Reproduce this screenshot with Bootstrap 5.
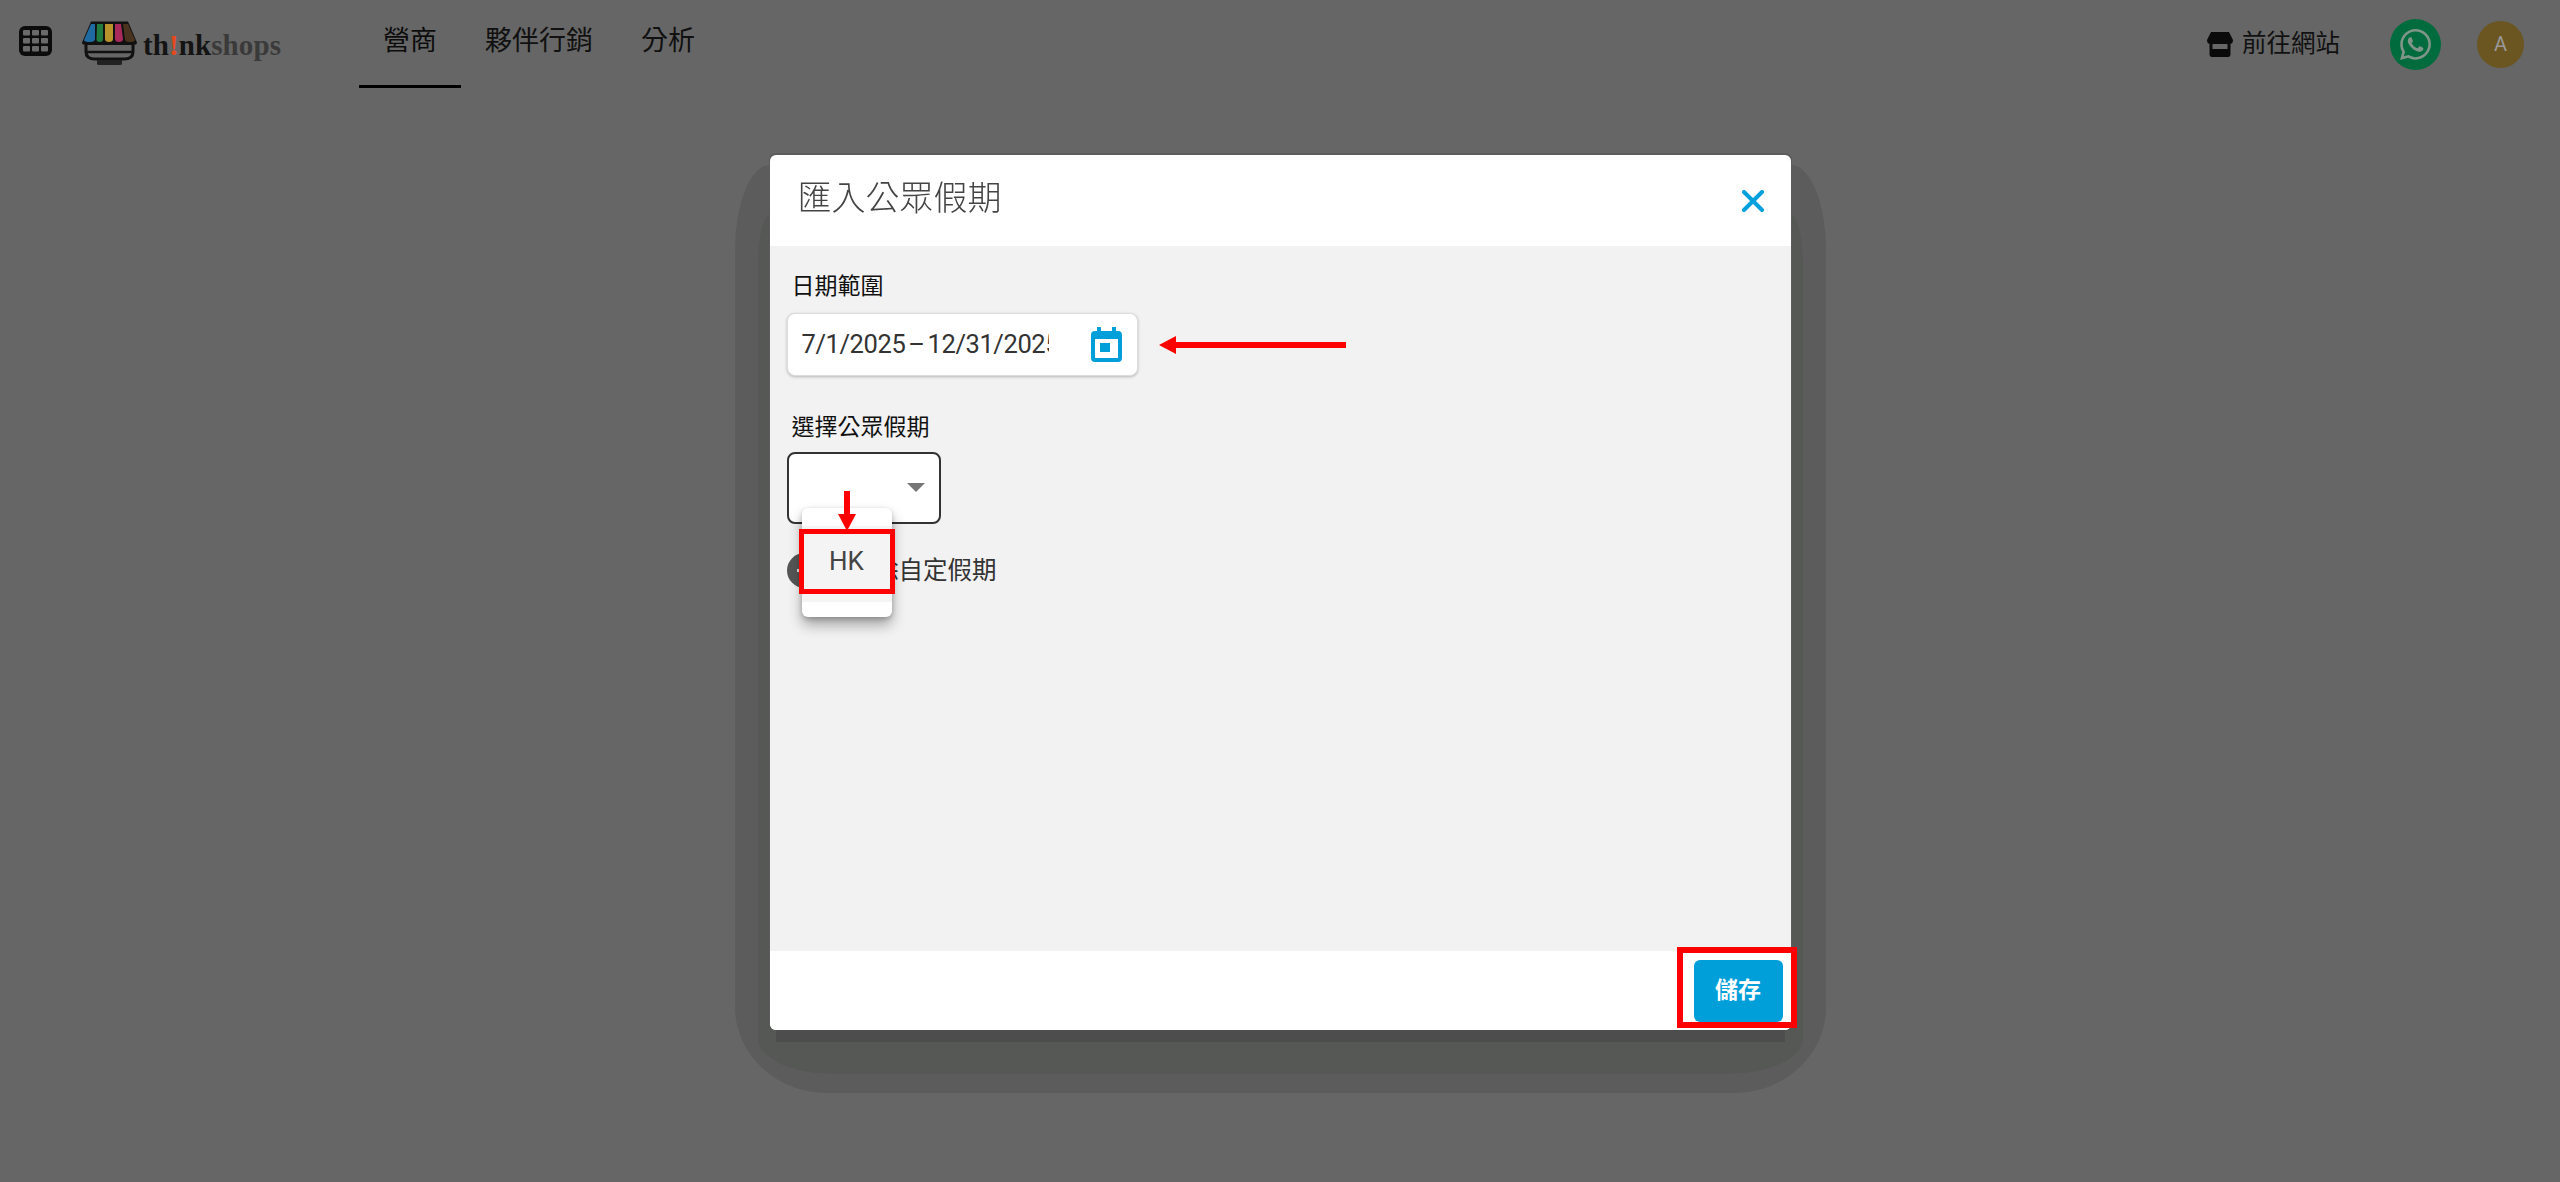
<!DOCTYPE html>
<html lang="zh-Hant">
<head>
<meta charset="utf-8">
<title>匯入公眾假期</title>
<link href="https://cdn.jsdelivr.net/npm/bootstrap@5.3.0/dist/css/bootstrap.min.css" rel="stylesheet">
<style>
html,body{height:100%;overflow:hidden}
body{background:#666;font-family:Roboto,"Noto Sans CJK TC",sans-serif;color:#222}
.topbar{height:88px;padding:0 36px 0 19px;background:#666}
.grid-ico{width:33px;height:30px;display:block;margin-top:-6px}
.brand-ico{width:55px;height:44px;margin-left:30px;display:block;margin-top:-2px}
.brand-txt{font-family:"Liberation Serif",serif;font-size:29px;letter-spacing:.1px;margin-left:6px;width:139px;color:#141414;line-height:1;margin-top:2px;font-weight:700}
.brand-txt .bang{color:#e8481a}
.brand-txt .soft{color:#3a3a3a}
.tabs{margin-left:77px;height:88px}
.tabs .nav-link{font-size:27px;line-height:36px;color:#111;padding:23px 24px 0;height:88px;border-bottom:3px solid transparent}
.tabs .nav-link.active{color:#0c0c0c;border-bottom-color:#000}
.site-link{font-size:24.5px;color:#111;text-decoration:none;margin-right:50px}
.store-ico{width:26px;height:25px;margin-right:9px}
.wa-dot{width:51px;height:51px;border-radius:50%;background:#006b3c;margin-right:36px}
.wa-dot svg{width:31px;height:31px}
.user-dot{width:47px;height:47px;border-radius:50%;background:#6b5521;color:#999;font-size:20px}

.dlg{position:fixed;top:0;left:0;right:0;bottom:0;z-index:1055}
.dlg .modal-dialog{max-width:1021px;width:1021px;margin:155px auto 0}
.dlg .modal-content{height:875px;border:0;border-radius:6px;background:#fff;box-shadow:0 18px 0 -6px #4d4d4d,0 -1px 0 1px #5c5c5c}
.dlg .modal-content::before,.dlg .modal-content::after{content:"";position:absolute;z-index:-1}
.dlg .modal-content::before{inset:10px -35px -63px -35px;background:#5c5c5c;border-radius:35px 35px 92px 92px/85px 85px 86px 86px}
.dlg .modal-content::after{inset:60px -12px -44px -12px;background:#565856;border-radius:12px 12px 75px 75px/50px 50px 36px 36px}
.dlg .modal-header{height:91px;padding:0 27px 0 28px;border:0;flex-shrink:0}
.dlg .modal-title{font-size:34px;font-weight:300;color:#444;line-height:1;margin-top:-6px}
.shut-btn{background:none;border:0;padding:0;width:22px;height:22px;display:block}
.shut-btn svg{display:block}
.dlg .modal-body{background:#f2f2f2;padding:26px 17px 0;flex:1 1 auto}
.fld-label{font-size:23px;line-height:30px;color:#111;margin:0 0 0 5px;display:block}
.date-box{width:351px;height:63px;background:#fff;border:1px solid #ddd;border-radius:8px;box-shadow:0 1px 3px rgba(0,0,0,.25);padding:0 15px 0 14px;margin-top:11px}
.date-input{width:247px;border:0;padding:0;font-size:25.5px;letter-spacing:-.4px;word-spacing:-3px;color:#333;font-family:Roboto,sans-serif;background:none;outline:0}
.cal-ico{width:31px;height:35px;display:block}
.sect-gap{margin-top:37px}
.pick-wrap{width:154px;height:72px;margin-top:9px}
.pick-box{height:72px;border:2px solid #333;border-radius:8px;background:#fff;padding:0 14px 0 0}
.pick-caret{width:0;height:0;border-left:9px solid transparent;border-right:9px solid transparent;border-top:9px solid #777;margin-top:-2px}
.pick-menu{position:absolute;top:56px;left:15px;width:90px;height:109px;min-width:0;padding:18px 0 15px;margin:0;border:0;border-radius:6px;background:#fff;box-shadow:0 8px 14px rgba(0,0,0,.32),0 2px 5px rgba(0,0,0,.2);z-index:3}
.pick-menu .dropdown-item{height:76px;padding:0;font-size:26px;color:#444;background:#f4f4f4;text-align:center;line-height:71px}
.del-row{margin-top:29px;font-size:24.5px;color:#333;line-height:35px}
.del-dot{width:35px;height:35px;border-radius:50%;background:#555;margin-right:28px;flex-shrink:0}
.del-dot i{display:block;width:15px;height:3px;background:#ddd}
.dlg .modal-footer{height:79px;padding:9px 8px 8px;border:0;background:#fff;border-radius:0 0 6px 6px;flex-shrink:0;align-items:flex-start}
.save-btn{width:89px;height:62px;margin:0;padding:0;border:0;border-radius:6px;background:#009fd9;color:#fff;font-weight:700;font-size:23px}
.save-btn:hover{background:#009fd9;color:#fff}
.mark-frame{position:absolute;border-style:solid;border-color:#f00;background:none;z-index:5;pointer-events:none}
.mark-hk{left:29px;top:374px;width:96px;height:65px;border-width:5px}
.mark-save{left:907px;top:792px;width:120px;height:81px;border-width:6px}
.mark-arrow{position:absolute;display:block;z-index:6}
.mark-a1{left:389px;top:181px;width:187px;height:18px}
.mark-a2{left:68px;top:336px;width:18px;height:40px}
</style>
</head>
<body>
<nav class="topbar d-flex align-items-center">
  <svg class="grid-ico" viewBox="0 0 33 30"><rect width="33" height="30" rx="6" fill="#0c0c0c"/><g fill="#6a6a6a"><rect x="4" y="4" width="7" height="5.5" rx="1"/><rect x="13" y="4" width="7" height="5.5" rx="1"/><rect x="22" y="4" width="7" height="5.5" rx="1"/><rect x="4" y="12" width="7" height="5.5" rx="1"/><rect x="13" y="12" width="7" height="5.5" rx="1"/><rect x="22" y="12" width="7" height="5.5" rx="1"/><rect x="4" y="20" width="7" height="5.5" rx="1"/><rect x="13" y="20" width="7" height="5.5" rx="1"/><rect x="22" y="20" width="7" height="5.5" rx="1"/></g></svg>
  <svg class="brand-ico" viewBox="0 0 55 44">
    <path d="M9 0.5H46L55 21.5Q55 24 51 24H4Q0 24 0 21.5Z" fill="#111"/>
    <path d="M9 3H13L13 18Q13 21 8 21Q2 21 2 19Z" fill="#1f6aa0"/>
    <path d="M15 3H21V18Q21 21 18 21Q14 21 14.500 18Z" fill="#217a3e"/>
    <path d="M23 3H31V18Q31 21 27 21Q23 21 23 18Z" fill="#b8922a"/>
    <path d="M33 3H39L41 18Q41 21 37 21Q33 21 33 18Z" fill="#a82a5a"/>
    <path d="M41 3H46L53 19Q53 21 47 21Q43 21 43 18Z" fill="#4a3420"/>
    <path d="M4 24V31Q4 38 13 38H42Q51 38 51 31V24" fill="none" stroke="#111" stroke-width="3"/>
    <path d="M5 31H50" stroke="#111" stroke-width="2.500"/>
    <path d="M15 39H40V43Q40 44 38 44H17Q15 44 15 43Z" fill="#222"/>
  </svg>
  <span class="brand-txt">th<span class="bang">!</span>nk<span class="soft">shops</span></span>
  <ul class="nav tabs">
    <li class="nav-item"><a class="nav-link active" href="#">營商</a></li>
    <li class="nav-item"><a class="nav-link" href="#">夥伴行銷</a></li>
    <li class="nav-item"><a class="nav-link" href="#">分析</a></li>
  </ul>
  <a class="site-link d-flex align-items-center ms-auto" href="#">
    <svg class="store-ico" viewBox="0 0 26 25"><path d="M4 0H22L26 8Q26 12 22.500 12H23.500V22Q23.500 25 21 25H5Q2.500 25 2.500 22V12H3.500Q0 12 0 8Z" fill="#0a0a0a"/><rect x="5.500" y="12" width="15" height="5" fill="#666"/></svg>
    前往網站
  </a>
  <span class="wa-dot d-flex align-items-center justify-content-center">
    <svg viewBox="0 0 24 24"><path fill="#7f9589" d="M17.472 14.382c-.297-.149-1.758-.867-2.03-.967-.273-.099-.471-.148-.67.15-.197.297-.767.966-.94 1.164-.173.199-.347.223-.644.075-.297-.15-1.255-.463-2.39-1.475-.883-.788-1.48-1.761-1.653-2.059-.173-.297-.018-.458.13-.606.134-.133.298-.347.446-.52.149-.174.198-.298.298-.497.099-.198.05-.371-.025-.52-.075-.149-.669-1.612-.916-2.207-.242-.579-.487-.5-.669-.51-.173-.008-.371-.01-.57-.01-.198 0-.52.074-.792.372-.272.297-1.04 1.016-1.04 2.479 0 1.462 1.065 2.875 1.213 3.074.149.198 2.096 3.2 5.077 4.487.709.306 1.262.489 1.694.625.712.227 1.36.195 1.871.118.571-.085 1.758-.719 2.006-1.413.248-.694.248-1.289.173-1.413-.074-.124-.272-.198-.57-.347m-5.421 7.403h-.004a9.87 9.87 0 01-5.031-1.378l-.361-.214-3.741.982.998-3.648-.235-.374a9.86 9.86 0 01-1.51-5.26c.001-5.45 4.436-9.884 9.888-9.884 2.64 0 5.122 1.03 6.988 2.898a9.825 9.825 0 012.893 6.994c-.003 5.45-4.437 9.884-9.885 9.884m8.413-18.297A11.815 11.815 0 0012.05 0C5.495 0 .16 5.335.157 11.892c0 2.096.547 4.142 1.588 5.945L.057 24l6.305-1.654a11.882 11.882 0 005.683 1.448h.005c6.554 0 11.89-5.335 11.893-11.893a11.821 11.821 0 00-3.48-8.413z"/></svg>
  </span>
  <span class="user-dot d-flex align-items-center justify-content-center">A</span>
</nav>

<div class="dlg modal d-block" role="dialog">
  <div class="modal-dialog">
    <div class="modal-content">
      <div class="modal-header d-flex justify-content-between">
        <h5 class="modal-title">匯入公眾假期</h5>
        <button class="shut-btn" type="button" aria-label="Close">
          <svg width="22" height="22" viewBox="0 0 22 22"><path d="M2 2L20 20M20 2L2 20" stroke="#00a0dc" stroke-width="4" stroke-linecap="round"/></svg>
        </button>
      </div>
      <div class="modal-body">
        <label class="fld-label">日期範圍</label>
        <div class="date-box d-flex align-items-center justify-content-between">
          <input class="date-input" type="text" value="7/1/2025 – 12/31/2025" readonly>
          <svg class="cal-ico" viewBox="0 0 31 35"><path d="M6 0H10V4H21V0H25V4H27Q31 4 31 8V31Q31 35 27 35H4Q0 35 0 31V8Q0 4 4 4H6Z" fill="#009fd9"/><rect x="4" y="12" width="23" height="19" fill="#fff"/><rect x="9" y="16" width="10" height="9" fill="#009fd9"/></svg>
        </div>
        <label class="fld-label sect-gap">選擇公眾假期</label>
        <div class="pick-wrap position-relative">
          <div class="pick-box d-flex align-items-center justify-content-end"><span class="pick-caret"></span></div>
          <ul class="dropdown-menu show pick-menu">
            <li><a class="dropdown-item" href="#">HK</a></li>
          </ul>
        </div>
        <div class="del-row d-flex align-items-center">
          <span class="del-dot d-flex align-items-center justify-content-center"><i></i></span>
          <span>刪除自定假期</span>
        </div>
      </div>
      <div class="modal-footer">
        <button class="btn save-btn" type="button">儲存</button>
      </div>
      <svg class="mark-arrow mark-a1" viewBox="0 0 187 18"><path d="M0 9L17 0V6H187V12H17V18Z" fill="#f00"/></svg>
      <svg class="mark-arrow mark-a2" viewBox="0 0 18 40"><path d="M6 0H12V23H18L9 40L0 23H6Z" fill="#f00"/></svg>
      <div class="mark-frame mark-hk"></div>
      <div class="mark-frame mark-save"></div>
    </div>
  </div>
</div>
<script src="https://cdn.jsdelivr.net/npm/bootstrap@5.3.0/dist/js/bootstrap.bundle.min.js"></script>
</body>
</html>
